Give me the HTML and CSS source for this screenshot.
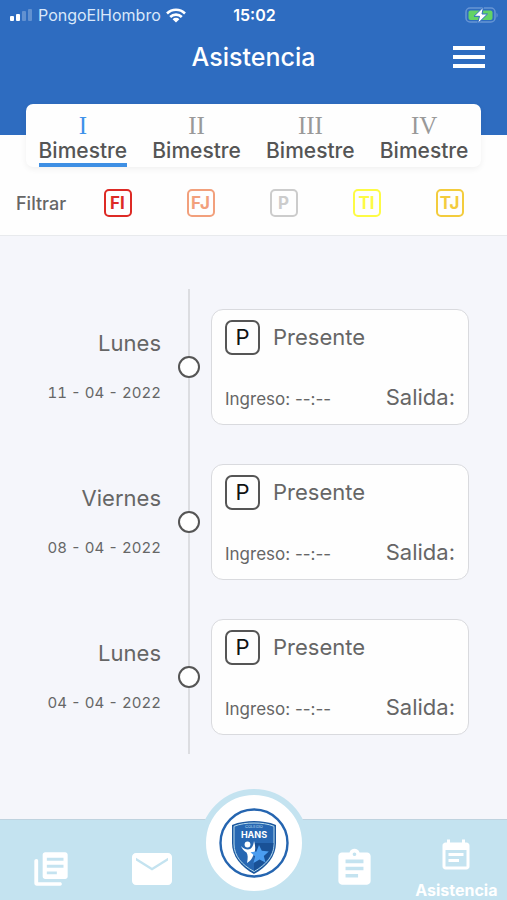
FILE: index.html
```html
<!DOCTYPE html>
<html lang="es">
<head>
  <meta charset="UTF-8">
  <meta name="viewport" content="width=device-width, initial-scale=1">
  <title>Asistencia</title>
  <link rel="stylesheet" href="styles.css">
</head>
<body>
  <header class="header">
    <div class="status">
      <div class="status-left">
        <svg width="23" height="12" viewBox="0 0 23 12" fill="#fff">
          <rect x="0" y="7" width="4" height="5" rx="1"/>
          <rect x="6" y="5" width="4" height="7" rx="1"/>
          <rect x="12" y="2" width="4" height="10" rx="1" opacity=".25"/>
          <rect x="18" y="0" width="4" height="12" rx="1" opacity=".25"/>
        </svg>
        <span>PongoElHombro</span>
        <svg width="20" height="15" viewBox="0 0 20 15" fill="none" stroke="#fff" stroke-width="2.6">
          <path d="M1 5.5a12.7 12.7 0 0 1 18 0"/>
          <path d="M4.2 9a8.2 8.2 0 0 1 11.6 0"/>
          <path d="M10 14.6 6.6 11.2a4.8 4.8 0 0 1 6.8 0z" fill="#fff" stroke="none"/>
        </svg>
      </div>
      <time class="clock">15:02</time>
      <div class="status-right">
        <svg width="34" height="17" viewBox="0 0 34 17">
          <rect x="1" y="1" width="29" height="14" rx="4" fill="none" stroke="#6795d4" stroke-width="1.5"/>
          <rect x="3.500" y="3.500" width="24" height="9.500" rx="2" fill="#63d365"/>
          <path d="M31.500 6v4.500c1.500-.6 1.500-3.900 0-4.500z" fill="#6795d4"/>
          <path d="M18.500 0 9 9.300h5.500L12.500 16.800 22.500 7H17z" fill="#fff" stroke="#2e6cc0" stroke-width="1"/>
        </svg>
      </div>
    </div>
    <div class="title-bar">
      <h1>Asistencia</h1>
      <button class="menu" aria-label="Menú">
        <svg width="32" height="22" viewBox="0 0 32 22" fill="#fff">
          <path d="M0 0h32v4H0zM0 9h32v4H0zM0 18h32v4H0z"/>
        </svg>
      </button>
    </div>
  </header>

  <section class="top">
    <div class="tabs">
      <button class="tab active"><span class="num">I</span><span class="name">Bimestre</span></button>
      <button class="tab"><span class="num">II</span><span class="name">Bimestre</span></button>
      <button class="tab"><span class="num">III</span><span class="name">Bimestre</span></button>
      <button class="tab"><span class="num">IV</span><span class="name">Bimestre</span></button>
    </div>
    <div class="filters">
      <span>Filtrar</span>
      <button class="filter fi">FI</button>
      <button class="filter fj">FJ</button>
      <button class="filter p">P</button>
      <button class="filter ti">TI</button>
      <button class="filter tj">TJ</button>
    </div>
  </section>

  <main class="timeline">
    <article class="entry">
      <div class="day">
        <h2>Lunes</h2>
        <time datetime="2022-04-11">11 - 04 - 2022</time>
      </div>
      <div class="line"><span class="dot"></span></div>
      <div class="card">
        <div class="state"><span class="badge">P</span><span>Presente</span></div>
        <div class="hours"><span class="in">Ingreso: --:--</span><span>Salida:</span></div>
      </div>
    </article>
    <article class="entry">
      <div class="day">
        <h2>Viernes</h2>
        <time datetime="2022-04-08">08 - 04 - 2022</time>
      </div>
      <div class="line"><span class="dot"></span></div>
      <div class="card">
        <div class="state"><span class="badge">P</span><span>Presente</span></div>
        <div class="hours"><span class="in">Ingreso: --:--</span><span>Salida:</span></div>
      </div>
    </article>
    <article class="entry">
      <div class="day">
        <h2>Lunes</h2>
        <time datetime="2022-04-04">04 - 04 - 2022</time>
      </div>
      <div class="line"><span class="dot"></span></div>
      <div class="card">
        <div class="state"><span class="badge">P</span><span>Presente</span></div>
        <div class="hours"><span class="in">Ingreso: --:--</span><span>Salida:</span></div>
      </div>
    </article>
  </main>

  <nav class="nav">
    <a href="#noticias" class="nav-item" aria-label="Noticias">
      <svg width="40" height="40" viewBox="0 0 24 24" fill="#fff">
        <path d="M3.300 6C2.500 6 2 6.500 2 7.200v13.300c0 .9.600 1.500 1.500 1.500H17.500c.6 0 1-.4 1-1s-.4-1-1-1H4.300V7.200C4.300 6.500 4 6 3.300 6zM20.500 2h-12C7.700 2 7 2.700 7 3.500v13c0 .8.700 1.500 1.500 1.500h12c.8 0 1.500-.7 1.500-1.500v-13c0-.8-.7-1.500-1.500-1.500zM19.500 7h-10V5.300h10zm0 4.200h-10V9.500h10zm-4 4h-6v-1.700h6z"/>
      </svg>
    </a>
    <a href="#mensajes" class="nav-item" aria-label="Mensajes">
      <svg width="48" height="48" viewBox="0 0 24 24" fill="#fff">
        <path d="M20 4H4c-1.100 0-2 .9-2 2v12c0 1.100.9 2 2 2h16c1.100 0 2-.9 2-2V6c0-1.100-.9-2-2-2zm0 3.700-8 5-8-5V6.400l8 5 8-5z"/>
      </svg>
    </a>
    <a href="#inicio" class="home" aria-label="Inicio">
      <svg width="96" height="96" viewBox="0 0 96 96">
        <circle cx="48" cy="48" r="33.500" fill="#fff" stroke="#2565b0" stroke-width="2.400"/>
        <path d="M48 26c7 0 15 1 22 4v18c0 13-9 24-22 31-13-7-22-18-22-31V30c7-3 15-4 22-4z" fill="#1b579e"/>
        <path d="M48 28c7 0 14 .8 20 3.300V49c0 12-8 21-20 27.500C36 70 28 61 28 49V31.300C34 28.800 41 28 48 28z" fill="#2767b2" stroke="#b8dcee" stroke-width="1"/>
        <path d="M48 48h19.500c0 11-7 20-19.500 28z" fill="#195196"/>
        <text x="48" y="33" class="logo-small">COLEGIO</text>
        <text x="48" y="43" class="logo-text">HANS</text>
        <circle cx="41.500" cy="49.500" r="2.900" fill="#fff"/>
        <path d="M35 51c2 2 4 3.500 7 3.500S47.500 51 48 46c2 6 1.500 11-1 15-1 3-3 5-6 7 1-5 1-8-.5-10.500C38 56 36 54 35 51z" fill="#fff"/>
        <path d="m53 50 2.800 5.800 7 .7-5 4.500 1.700 6.500-6-3-6 3.500 1.500-6.800-4.500-4 6-.7z" fill="#4b9df0"/>
      </svg>
    </a>
    <a href="#tareas" class="nav-item" aria-label="Tareas">
      <svg width="43" height="43" viewBox="0 0 24 24" fill="#fff">
        <path d="M19 3h-4.200C14.400 1.800 13.300 1 12 1s-2.400.8-2.800 2H5c-1.100 0-2 .9-2 2v14c0 1.100.9 2 2 2h14c1.100 0 2-.9 2-2V5c0-1.100-.9-2-2-2zm-7 0c.6 0 1 .4 1 1s-.4 1-1 1-1-.4-1-1 .4-1 1-1zm2 14H7v-2h7zm3-4H7v-2h10zm0-4H7V7h10z"/>
      </svg>
    </a>
    <a href="#asistencia" class="nav-item current">
      <svg width="36" height="36" viewBox="0 0 24 24" fill="#fff">
        <path d="M17 10H7v2h10zm2-7h-1V1h-2v2H8V1H6v2H5c-1.100 0-2 .9-2 2v14c0 1.100.9 2 2 2h14c1.100 0 2-.9 2-2V5c0-1.100-.9-2-2-2zm0 16H5V8h14zm-5-5H7v2h7z"/>
      </svg>
      <span>Asistencia</span>
    </a>
  </nav>
</body>
</html>
```

FILE: styles.css
```css
* {
  box-sizing: border-box;
}
body {
  margin: 0;
  min-height: 100vh;
  display: flex;
  flex-direction: column;
  background: #f5f6fb;
  color: #666;
  font-family: Inter, sans-serif;
}
button {
  border: none;
  background: none;
  padding: 0;
  font-family: inherit;
  cursor: pointer;
}
svg {
  display: block;
}

/* header */
.header {
  background: #2e6cc0;
  color: #fff;
  padding-bottom: 51px;
}
.status {
  display: grid;
  grid-template-columns: 1fr auto 1fr;
  align-items: center;
  height: 30px;
  padding: 0 8px 0 10px;
  font-size: 16px;
}
.status-left {
  display: flex;
  align-items: center;
  gap: 5px;
  color: #d9e8fa;
}
.clock {
  font-weight: 600;
}
.status-right {
  display: flex;
  justify-content: flex-end;
}
.title-bar {
  display: grid;
  grid-template-columns: 1fr auto 1fr;
  align-items: center;
  height: 54px;
  padding: 0 22px;
}
.title-bar h1 {
  grid-column: 2;
  margin: 0;
  font-size: 25px;
  font-weight: 500;
}
.menu {
  justify-self: end;
}

/* tabs and filters */
.top {
  background: #fefefe;
  border-bottom: 1px solid #e8eaed;
}
.tabs {
  display: grid;
  grid-template-columns: repeat(4, 1fr);
  margin: -31px 26px 0;
  background: #fefefe;
  border-radius: 7px;
  box-shadow: 0 2px 6px rgba(0, 0, 0, 0.06);
}
.tab {
  display: flex;
  flex-direction: column;
  align-items: center;
  padding-top: 10px;
  color: #555;
}
.num {
  font-family: "Liberation Serif", serif;
  font-size: 25px;
  line-height: 24px;
  color: #999;
}
.name {
  font-size: 21px;
  font-weight: 500;
  line-height: 25px;
  border-bottom: 4px solid transparent;
}
.active .num {
  color: #3e92ea;
}
.active .name {
  border-color: #3e8fe4;
}
.filters {
  display: grid;
  grid-template-columns: 60px repeat(5, 1fr);
  align-items: center;
  justify-items: center;
  height: 68px;
  padding: 4px 16px 0;
  font-size: 18px;
  font-weight: 500;
}
.filters span {
  justify-self: start;
}
.filter {
  width: 28px;
  height: 28px;
  border: 2px solid;
  border-radius: 5px;
  font-size: 17px;
  font-weight: 700;
  line-height: 24px;
}
.fi {
  color: #dd2a25;
}
.fj {
  color: #f2a07c;
}
.p {
  color: #ccc;
}
.ti {
  color: #fdfb45;
}
.tj {
  color: #f3cc3d;
}

/* timeline */
.timeline {
  flex: 1;
  padding: 53px 38px 65px 0;
}
.entry {
  display: grid;
  grid-template-columns: 167px 44px 1fr;
  height: 155px;
}
.day {
  padding: 40px 6px 0 0;
  text-align: right;
}
.day h2 {
  margin: 0 0 26px;
  font-size: 22px;
  font-weight: 400;
  line-height: 28px;
}
.day time {
  display: block;
  font-size: 15px;
  line-height: 20px;
  font-variant-numeric: tabular-nums;
}
.line {
  display: flex;
  align-items: center;
  justify-content: center;
  background: linear-gradient(#dcdde1, #dcdde1) center / 2px 100% no-repeat;
}
.dot {
  width: 22px;
  height: 22px;
  border: 2px solid #555;
  border-radius: 50%;
  background: #fff;
}
.card {
  align-self: center;
  display: flex;
  flex-direction: column;
  justify-content: space-between;
  height: 116px;
  padding: 10px 13px;
  background: #fefefe;
  border: 1px solid #d9dade;
  border-radius: 12px;
  font-size: 22px;
}
.state {
  display: flex;
  align-items: center;
  gap: 13px;
}
.badge {
  width: 35px;
  height: 35px;
  border: 2px solid #555;
  border-radius: 7px;
  color: #111;
  text-align: center;
  line-height: 31px;
}
.hours {
  display: flex;
  align-items: baseline;
  justify-content: space-between;
  line-height: 30px;
}
.in {
  font-size: 17px;
}

/* bottom bar */
.nav {
  display: grid;
  grid-template-columns: repeat(5, minmax(0, 1fr));
  height: 81px;
  background: #c4e3f0;
  border-top: 1px solid #bfd3df;
}
.nav-item {
  display: flex;
  flex-direction: column;
  align-items: center;
  justify-content: center;
  padding-top: 17px;
  color: #fff;
  text-decoration: none;
}
.current {
  justify-content: flex-end;
  gap: 6px;
  padding: 0;
  font-size: 16px;
  font-weight: 700;
  line-height: 20px;
}
.home {
  justify-self: center;
  align-self: start;
  margin-top: -31px;
  border: 6px solid #c4e3f0;
  border-radius: 50%;
  background: #fff;
}
.logo-small {
  font-family: Inter, sans-serif;
  font-size: 4px;
  fill: #b8dcee;
  text-anchor: middle;
}
.logo-text {
  font-family: Inter, sans-serif;
  font-size: 9px;
  font-weight: 700;
  fill: #fff;
  text-anchor: middle;
}
```
